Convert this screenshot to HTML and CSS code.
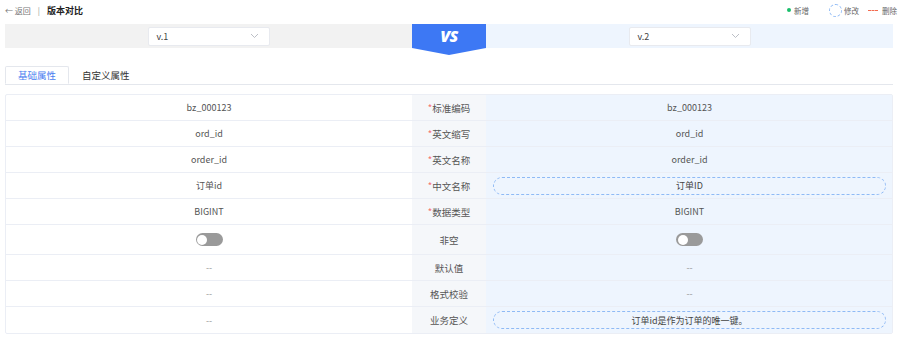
FILE: index.html
```html
<!DOCTYPE html>
<html lang="zh-CN">
<head>
    <meta charset="UTF-8">
    <title>版本对比</title>
    <link rel="stylesheet" href="styles.css">
</head>
<body>
    <div class="page">
        <!-- Header -->
        <div class="header">
            <div class="crumb">
                <span class="back">&larr; 返回</span>
                <span class="sep">|</span>
                <span class="title">版本对比</span>
            </div>
            <div class="legend">
                <span class="dot"></span><span>新增</span>
                <span class="ring"></span><span>修改</span>
                <span class="dash"></span><span>删除</span>
            </div>
        </div>

        <!-- Version selectors -->
        <div class="compare-bar">
            <div class="side left">
                <div class="select"><span>v.1</span><svg width="9" height="6" viewBox="0 0 9 6"><path d="M1 1l3.5 3.5L8 1" fill="none" stroke="#b4b8bf" stroke-width="0.9"/></svg></div>
            </div>
            <div class="vs">
                <svg width="74" height="31" viewBox="0 0 74 31"><polygon points="0,0 74,0 74,24 37,31 0,24" fill="#3d78f4"/></svg>
                <span>VS</span>
            </div>
            <div class="side right">
                <div class="select"><span>v.2</span><svg width="9" height="6" viewBox="0 0 9 6"><path d="M1 1l3.5 3.5L8 1" fill="none" stroke="#b4b8bf" stroke-width="0.9"/></svg></div>
            </div>
        </div>

        <!-- Tabs -->
        <div class="tabs">
            <div class="tab active">基础属性</div>
            <div class="tab">自定义属性</div>
        </div>

        <!-- Compare table -->
        <div class="table">
            <div class="row">
                <div class="cell">bz_000123</div>
                <div class="label"><i>*</i>标准编码</div>
                <div class="cell new">bz_000123</div>
            </div>
            <div class="row">
                <div class="cell">ord_id</div>
                <div class="label"><i>*</i>英文缩写</div>
                <div class="cell new">ord_id</div>
            </div>
            <div class="row">
                <div class="cell">order_id</div>
                <div class="label"><i>*</i>英文名称</div>
                <div class="cell new">order_id</div>
            </div>
            <div class="row">
                <div class="cell">订单id</div>
                <div class="label"><i>*</i>中文名称</div>
                <div class="cell new"><div class="changed">订单ID</div></div>
            </div>
            <div class="row">
                <div class="cell">BIGINT</div>
                <div class="label"><i>*</i>数据类型</div>
                <div class="cell new">BIGINT</div>
            </div>
            <div class="row tall">
                <div class="cell"><span class="switch"></span></div>
                <div class="label">非空</div>
                <div class="cell new"><span class="switch"></span></div>
            </div>
            <div class="row">
                <div class="cell muted">--</div>
                <div class="label">默认值</div>
                <div class="cell new muted">--</div>
            </div>
            <div class="row">
                <div class="cell muted">--</div>
                <div class="label">格式校验</div>
                <div class="cell new muted">--</div>
            </div>
            <div class="row">
                <div class="cell muted">--</div>
                <div class="label">业务定义</div>
                <div class="cell new"><div class="changed">订单id是作为订单的唯一键。</div></div>
            </div>
        </div>
    </div>
</body>
</html>
```

FILE: styles.css
```css
body {
    margin: 0;
    font-family: "Noto Sans CJK SC", "Liberation Sans", sans-serif;
    font-size: 9px;
    color: #555;
    background-color: #fff;
}
.page {
    width: 888px;
    margin-left: 5px;
}
.header {
    display: flex;
    justify-content: space-between;
    align-items: center;
    height: 20px;
    width: 892px;
}
.crumb {
    display: flex;
    align-items: center;
}
.back {
    color: #777;
    font-size: 8px;
}
.sep {
    color: #999;
    margin: 0 7px 0 7px;
    font-size: 8px;
}
.title {
    font-weight: bold;
    color: #222;
}
.legend {
    display: flex;
    align-items: center;
    color: #666;
    font-size: 7.5px;
}
.dot {
    width: 4px;
    height: 4px;
    border-radius: 50%;
    background-color: #19be6b;
    margin-right: 3px;
}
.ring {
    width: 11px;
    height: 11px;
    border-radius: 50%;
    border: 1px dashed #8fbaf5;
    margin: 0 2px 0 20px;
}
.dash {
    width: 10px;
    border-top: 1px dashed #f36b4f;
    margin: 0 4px 0 9px;
}
.compare-bar {
    display: grid;
    grid-template-columns: 407px 74px 407px;
    grid-template-rows: 24px;
    margin-top: 4px;
}
.side {
    display: flex;
    align-items: center;
    justify-content: center;
}
.side.left {
    background-color: #f2f2f2;
}
.side.right {
    background-color: #eef5fe;
}
.select {
    width: 122px;
    height: 19px;
    background-color: #fff;
    border: 1px solid #e8eaef;
    border-radius: 2px;
    display: flex;
    align-items: center;
    justify-content: space-between;
    padding: 0 10px 0 8px;
    box-sizing: border-box;
    color: #444;
}
.vs {
    position: relative;
    height: 24px;
}
.vs svg {
    display: block;
}
.vs span {
    position: absolute;
    left: 0;
    top: 0;
    width: 74px;
    line-height: 24px;
    text-align: center;
    color: #fff;
    font-family: "Open Sans", sans-serif;
    font-weight: 800;
    font-style: italic;
    font-size: 16px;
    letter-spacing: -0.5px;
}
.tabs {
    display: flex;
    margin-top: 18px;
    border-bottom: 1px solid #e4e7ed;
    height: 18px;
}
.tab {
    padding: 0 14px 0 13px;
    line-height: 18px;
    color: #333;
    font-size: 9.5px;
}
.tab.active {
    color: #4a80f0;
    border: 1px solid #e4e7ed;
    border-bottom: 1px solid #fff;
    border-radius: 2px 2px 0 0;
    background-color: #fff;
    line-height: 17px;
    padding: 0 12px;
}
.table {
    margin-top: 9px;
    border: 1px solid #ebeef5;
    border-radius: 2px;
}
.row {
    display: grid;
    grid-template-columns: 406px 74px 406px;
    height: 26px;
    box-sizing: border-box;
    border-bottom: 1px solid #ebeef5;
}
.row:last-child {
    border-bottom: none;
}
.row.tall {
    height: 30px;
}
.cell {
    display: flex;
    align-items: center;
    justify-content: center;
    color: #555;
}
.cell.new {
    background-color: #eef5fe;
    padding: 0 6px 0 7px;
}
.cell.muted {
    color: #999;
}
.label {
    display: flex;
    align-items: center;
    justify-content: center;
    background-color: #f5f7fa;
    color: #555;
    font-size: 9.5px;
}
.label i {
    font-style: normal;
    color: #f56c6c;
}
.changed {
    width: 100%;
    height: 18px;
    border: 1px dashed #8fbaf5;
    border-radius: 9px;
    box-sizing: border-box;
    display: flex;
    align-items: center;
    justify-content: center;
    color: #444;
}
.switch {
    position: relative;
    width: 27px;
    height: 13px;
    border-radius: 7px;
    background-color: #9a9a9a;
}
.switch::after {
    content: "";
    position: absolute;
    left: 1.5px;
    top: 1.5px;
    width: 10px;
    height: 10px;
    border-radius: 50%;
    background-color: #fff;
}
```
